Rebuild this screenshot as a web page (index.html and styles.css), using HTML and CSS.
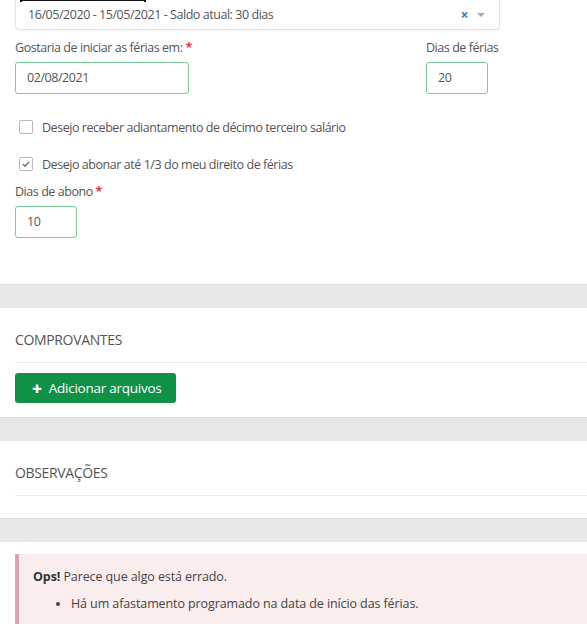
FILE: index.html
```html
<!DOCTYPE html>
<html lang="pt-BR">
<head>
<meta charset="utf-8">
<title>Solicitação de férias</title>
<link rel="stylesheet" href="styles.css">
</head>
<body>
<div class="page">
  <div class="cut-title"></div>

  <section class="panel panel-form">
    <div class="select">
      <span class="select-value">16/05/2020 - 15/05/2021 - Saldo atual: 30 dias</span>
      <span class="select-clear">×</span>
      <span class="select-caret"></span>
    </div>

    <div class="field-row">
      <div class="field field-start">
        <label class="label">Gostaria de iniciar as férias em: <span class="req">*</span></label>
        <div class="input input-date">02/08/2021</div>
      </div>
      <div class="field">
        <label class="label">Dias de férias</label>
        <div class="input input-short">20</div>
      </div>
    </div>

    <div class="check check-first">
      <span class="box"></span>
      <span class="check-text">Desejo receber adiantamento de décimo terceiro salário</span>
    </div>
    <div class="check check-second">
      <span class="box box-on">
        <svg viewBox="0 0 12 12" width="10" height="10"><path d="M2.2 6.2 L4.8 8.6 L9.8 3.4" fill="none" stroke="#555" stroke-width="1.4"/></svg>
      </span>
      <span class="check-text">Desejo abonar até 1/3 do meu direito de férias</span>
    </div>

    <div class="field field-abono">
      <label class="label">Dias de abono <span class="req">*</span></label>
      <div class="input input-short">10</div>
    </div>
  </section>

  <div class="band"></div>

  <section class="panel panel-files">
    <h2 class="heading">COMPROVANTES</h2>
    <div class="divider"></div>
    <button class="btn-add" type="button"><span class="plus">+</span>Adicionar arquivos</button>
  </section>

  <div class="band"></div>

  <section class="panel panel-notes">
    <h2 class="heading">OBSERVAÇÕES</h2>
    <div class="divider"></div>
  </section>

  <div class="band"></div>

  <section class="panel panel-alert">
    <div class="alert">
      <p class="alert-title"><strong>Ops!</strong> Parece que algo está errado.</p>
      <ul class="alert-list">
        <li>Há um afastamento programado na data de início das férias.</li>
      </ul>
    </div>
  </section>
</div>
</body>
</html>
```

FILE: styles.css
```css
* { box-sizing: border-box; }

html, body {
  margin: 0;
  padding: 0;
  background: #fff;
}

body {
  font-family: "Open Sans", "Noto Sans", sans-serif;
  font-size: 12.5px;
  letter-spacing: -0.45px;
  color: #555;
}

.page {
  position: relative;
  width: 587px;
  height: 624px;
  overflow: hidden;
}

/* bottom edge of the heading above, scrolled out of view */
.cut-title {
  position: absolute;
  top: 0;
  left: 20px;
  width: 126px;
  height: 2px;
  border-top: 1px solid #111;
  border-left: 2px solid #111;
  border-right: 2px solid #111;
  z-index: 2;
}

.panel {
  background: #fff;
  padding: 0 0 0 15px;
}

.panel-form {
  padding-bottom: 46px;
  border-bottom: 1px solid #dcdddf;
}

/* select (top part scrolled off) */
.select {
  display: flex;
  align-items: center;
  width: 485px;
  height: 40px;
  margin-top: -10px;
  padding: 10px 12px 0 12px;
  border: 1px solid #e2e2e2;
  border-radius: 4px;
  box-shadow: 0 1px 2px rgba(0, 0, 0, 0.05);
}

.select-value {
  flex: 1;
  line-height: 18px;
}

.select-clear {
  color: #3c7bd0;
  font-weight: 700;
  font-size: 14px;
  margin-right: 9px;
  line-height: 18px;
}

.select-caret {
  width: 0;
  height: 0;
  border-left: 4px solid transparent;
  border-right: 4px solid transparent;
  border-top: 4px solid #aaa;
  margin-right: 2px;
}

.field-row {
  display: flex;
  margin-top: 9px;
}

.field-start {
  flex: 0 0 411px;
}

.label {
  display: block;
  line-height: 18px;
  margin-bottom: 5px;
}

.req {
  color: #e53935;
  font-weight: 700;
}

.input {
  height: 32px;
  padding: 0 11px;
  border: 1.5px solid #7ccb9b;
  border-radius: 3px;
  line-height: 29px;
}

.input-date { width: 174px; }
.input-short { width: 62px; }

.check {
  display: flex;
  align-items: center;
  height: 18px;
  padding-left: 4px;
}

.check-first { margin-top: 24px; }
.check-second { margin-top: 19px; }

.box {
  width: 14px;
  height: 14px;
  border: 1px solid #b9b9b9;
  border-radius: 2px;
  margin-right: 9px;
  display: flex;
  align-items: center;
  justify-content: center;
  background: #fff;
}

.field-abono {
  margin-top: 10px;
}

.band {
  height: 23px;
  background: #e6e7e9;
}

.panel-files {
  padding-top: 22px;
  padding-bottom: 14px;
  border-bottom: 1px solid #dcdddf;
}

.panel-notes {
  padding-top: 22px;
  padding-bottom: 22px;
  border-bottom: 1px solid #dcdddf;
}

.heading {
  margin: 0;
  font-size: 14px;
  font-weight: 400;
  line-height: 20px;
  letter-spacing: -0.35px;
  color: #555;
}

.divider {
  height: 1px;
  background: #ececec;
  margin-top: 12px;
}

.btn-add {
  display: flex;
  align-items: center;
  margin-top: 10px;
  height: 30px;
  width: 161px;
  padding: 0 0 0 17px;
  border: none;
  border-radius: 3px;
  background: #0f9147;
  color: #fff;
  font-family: inherit;
  font-size: 13.5px;
  letter-spacing: -0.25px;
}

.plus {
  font-weight: 800;
  font-size: 17px;
  margin-right: 7px;
  line-height: 1;
}

.panel-alert {
  padding-top: 12px;
}

.alert {
  background: #f9eded;
  border-left: 4px solid #dba3ae;
  padding: 14px 0 20px 14px;
  font-size: 12.5px;
  letter-spacing: -0.1px;
  color: #444;
}

.alert-title {
  margin: 0;
  line-height: 18px;
}

.alert-title strong { color: #333; }

.alert-list {
  margin: 9px 0 0 0;
  padding-left: 38px;
  line-height: 18px;
}
```
